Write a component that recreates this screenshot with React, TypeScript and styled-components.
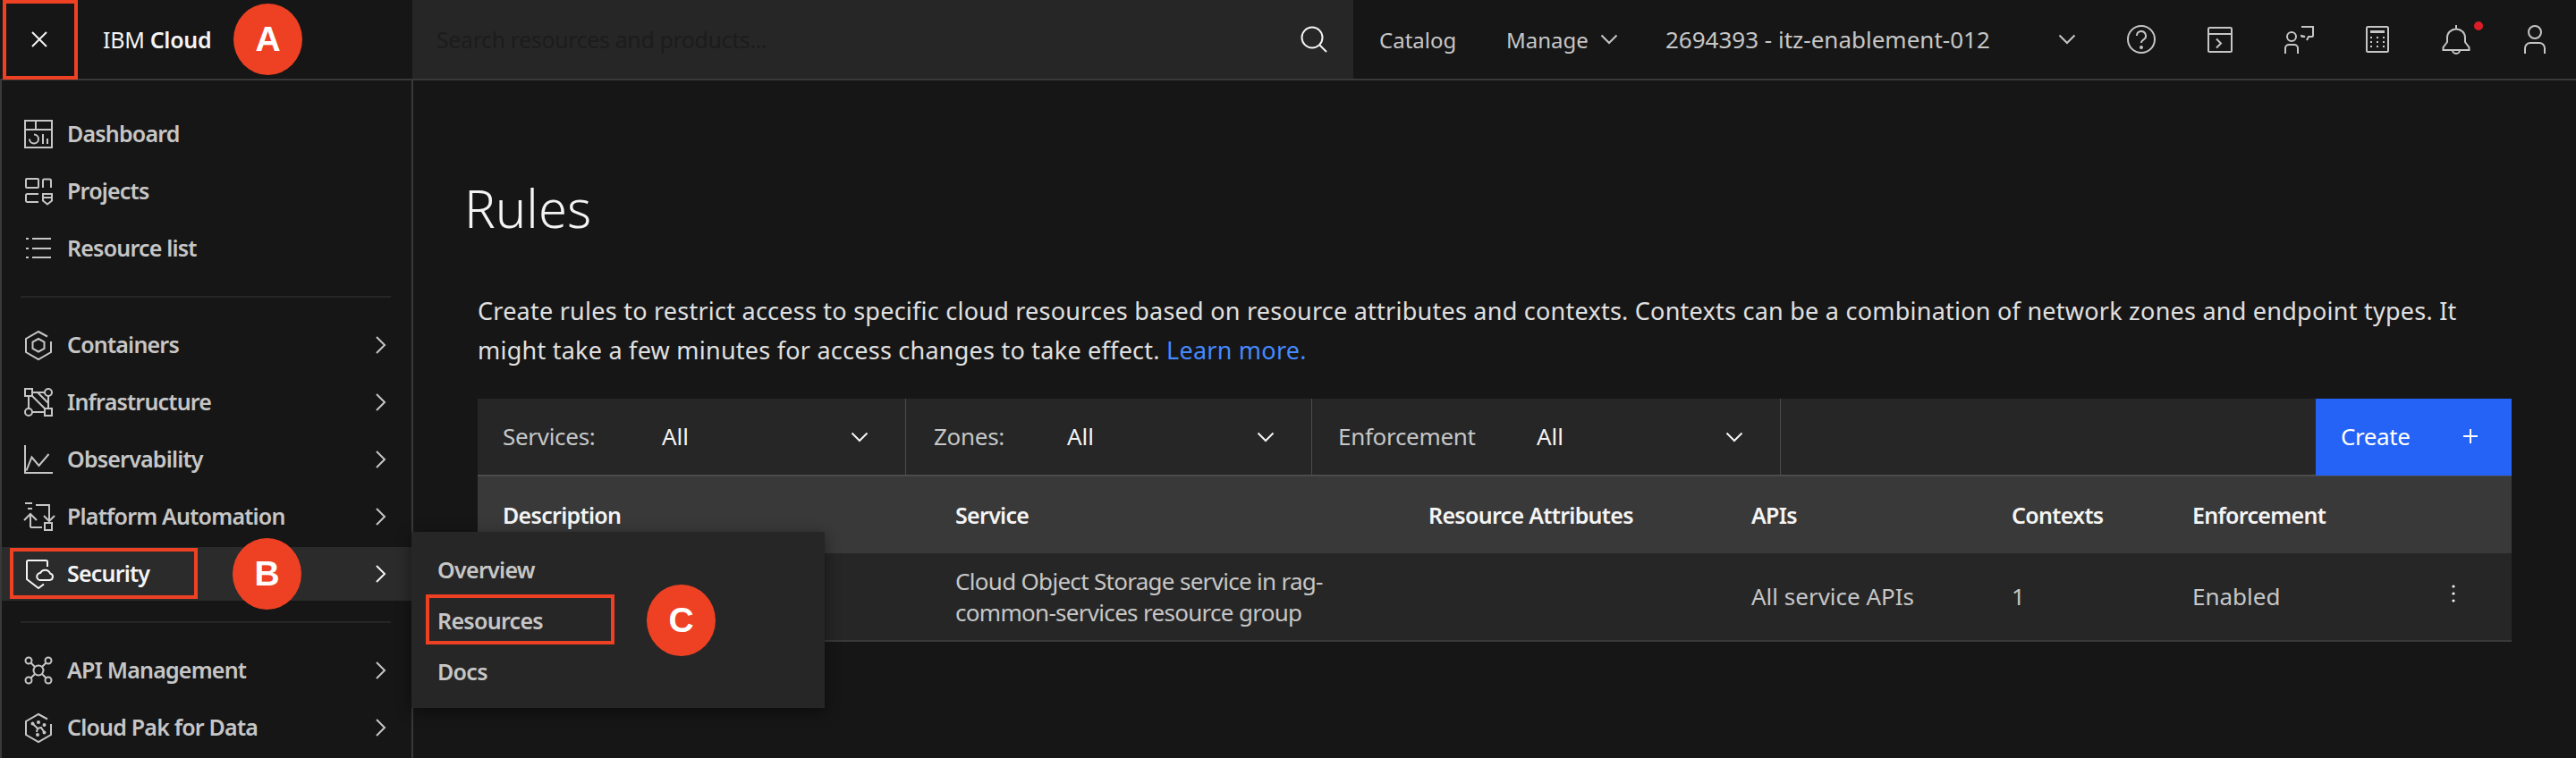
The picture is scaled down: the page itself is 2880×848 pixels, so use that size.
import React from 'react';
import styled, { createGlobalStyle } from 'styled-components';

const RED = '#ee4124';
const FONT = `'Noto Sans', 'Open Sans', sans-serif`;

const GlobalStyle = createGlobalStyle`
  html, body {
    margin: 0;
    padding: 0;
    background: #161616;
    font-family: ${FONT};
  }
  * {
    box-sizing: border-box;
  }
`;

const Page = styled.div`
  position: relative;
  width: 2880px;
  height: 848px;
  overflow: hidden;
  display: flex;
  flex-direction: column;
  background: #161616;
`;

const Header = styled.header`
  display: flex;
  align-items: center;
  height: 90px;
  flex: none;
  border-bottom: 2px solid #393939;
  color: #c6c6c6;
  font-size: 26px;
`;

const CloseButton = styled.div`
  width: 88px;
  height: 88px;
  display: flex;
  align-items: center;
  justify-content: center;
  color: #f4f4f4;
`;

const Brand = styled.div`
  width: 373px;
  padding-left: 27px;
  color: #f4f4f4;
  font-size: 25px;
  letter-spacing: -0.3px;
  b {
    font-weight: 600;
  }
`;

const SearchBox = styled.div`
  width: 1052px;
  height: 88px;
  display: flex;
  align-items: center;
  justify-content: space-between;
  padding: 0 28px 0 27px;
  background: #262626;
  color: #f4f4f4;
`;

const Placeholder = styled.span`
  color: #1c1c1c;
  font-size: 25px;
  letter-spacing: -0.4px;
`;

const NavItem = styled.div<{ $width: number; $small?: boolean }>`
  width: ${p => p.$width}px;
  height: 88px;
  display: flex;
  align-items: center;
  gap: 13px;
  padding: 0 29px;
  white-space: nowrap;
  font-size: ${p => (p.$small ? 24 : 26)}px;
`;

const NavPush = styled.span`
  margin-left: auto;
  display: flex;
`;

const IconButton = styled.div`
  position: relative;
  width: 88px;
  height: 88px;
  display: flex;
  align-items: center;
  justify-content: center;
`;

const NoticeDot = styled.span`
  position: absolute;
  top: 24px;
  right: 14px;
  width: 10px;
  height: 10px;
  border-radius: 50%;
  background: #da1e28;
`;

const Body = styled.div`
  flex: 1;
  display: flex;
  min-height: 0;
`;

const Sidebar = styled.nav`
  width: 462px;
  flex: none;
  padding: 30px 0 0;
  border-left: 2px solid #393939;
  border-right: 2px solid #393939;
  display: flex;
  flex-direction: column;
`;

const NavGroup = styled.div`
  display: flex;
  flex-direction: column;
  gap: 4px;
`;

const Rule = styled.hr`
  margin: 23px 23px 23px 21px;
  height: 2px;
  border: 0;
  background: #262626;
  flex: none;
`;

const SideRow = styled.div<{ $active?: boolean }>`
  height: 60px;
  display: flex;
  align-items: center;
  gap: 16px;
  padding: 0 24px 0 25px;
  font-size: 25px;
  letter-spacing: -0.8px;
  font-weight: 600;
  color: ${p => (p.$active ? '#f4f4f4' : '#c6c6c6')};
  background: ${p => (p.$active ? '#2b2b2b' : 'transparent')};
  span {
    flex: 1;
    white-space: nowrap;
    padding-bottom: 2px;
  }
`;

const Svg = styled.svg<{ $size?: number }>`
  width: ${p => p.$size ?? 32}px;
  height: ${p => p.$size ?? 32}px;
  flex: none;
  fill: none;
  stroke: currentColor;
  stroke-width: 2;
  overflow: visible;
`;

const Main = styled.main`
  flex: 1;
  padding: 105px 72px 0 57px;
  min-width: 0;
`;

const Title = styled.h1`
  margin: 0;
  font-size: 58px;
  line-height: 76px;
  font-weight: 300;
  color: #f4f4f4;
`;

const Content = styled.div`
  margin: 55px 0 0 15px;
`;

const Intro = styled.p`
  margin: 0;
  font-size: 27px;
  letter-spacing: 0.24px;
  line-height: 44px;
  color: #e0e0e0;
  white-space: nowrap;
  a {
    color: #4589ff;
    text-decoration: none;
  }
`;

const Toolbar = styled.div`
  margin-top: 32px;
  height: 87px;
  display: flex;
  background: #262626;
  border-bottom: 2px solid #4c4c4c;
`;

const Filter = styled.div<{ $width: number; $pad: number; $labelWidth: number }>`
  width: ${p => p.$width}px;
  display: flex;
  align-items: center;
  padding: 0 41px 0 ${p => p.$pad}px;
  border-right: 1px solid #4c4c4c;
  font-size: 26px;
  color: #f4f4f4;
  label {
    width: ${p => p.$labelWidth}px;
    color: #c6c6c6;
    padding-bottom: 2px;
    letter-spacing: -0.3px;
  }
  span {
    flex: 1;
    padding-bottom: 2px;
  }
`;

const Spacer = styled.div`
  flex: 1;
`;

const CreateButton = styled.div`
  width: 219px;
  margin-bottom: -1px;
  display: flex;
  align-items: center;
  justify-content: space-between;
  padding: 0 37px 2px 28px;
  background: #2463f5;
  color: #ffffff;
  font-size: 26px;
  letter-spacing: -0.4px;
`;

const columns = '506px 529px 361px 291px 202px 293px 1fr';

const HeadRow = styled.div`
  display: grid;
  grid-template-columns: ${columns};
  align-items: center;
  height: 86px;
  padding-bottom: 1px;
  background: #393939;
  color: #f4f4f4;
  font-size: 25px;
  letter-spacing: -0.7px;
  font-weight: 600;
`;

const DataRow = styled.div`
  display: grid;
  grid-template-columns: ${columns};
  align-items: center;
  height: 99px;
  background: #262626;
  border-bottom: 2px solid #393939;
  color: #c6c6c6;
  font-size: 26px;
  line-height: 35px;
`;

const Cell = styled.div<{ $tight?: boolean }>`
  padding-left: 28px;
  white-space: nowrap;
  letter-spacing: ${p => (p.$tight ? '-0.7px' : 'inherit')};
`;

const MenuCell = styled.div`
  padding: 0 0 8px 11px;
  display: flex;
  color: #f4f4f4;
`;

const Flyout = styled.div`
  position: absolute;
  left: 460px;
  top: 595px;
  width: 462px;
  height: 197px;
  padding: 13px 0 0 29px;
  background: #262626;
  box-shadow: 0 4px 16px rgba(0, 0, 0, 0.45);
  display: flex;
  flex-direction: column;
`;

const FlyoutItem = styled.div`
  height: 57px;
  display: flex;
  align-items: center;
  font-size: 25px;
  letter-spacing: -0.7px;
  font-weight: 600;
  color: #c6c6c6;
`;

const Badge = styled.div<{ $left: number; $top: number }>`
  position: absolute;
  left: ${p => p.$left}px;
  top: ${p => p.$top}px;
  width: 77px;
  height: 80px;
  border-radius: 50%;
  background: ${RED};
  color: #ffffff;
  display: flex;
  align-items: center;
  justify-content: center;
  font-family: 'Liberation Sans', sans-serif;
  font-size: 39px;
  font-weight: 700;
`;

const Callout = styled.div<{ $left: number; $top: number; $width: number; $height: number }>`
  position: absolute;
  left: ${p => p.$left}px;
  top: ${p => p.$top}px;
  width: ${p => p.$width}px;
  height: ${p => p.$height}px;
  border: 4px solid ${RED};
`;

const IconClose = () => (
  <Svg viewBox="0 0 32 32">
    <path d="M8 8 L24 24 M24 8 L8 24" />
  </Svg>
);

const IconSearch = () => (
  <Svg viewBox="0 0 32 32">
    <circle cx="14" cy="14" r="11.5" />
    <path d="M22.5 22.5 L30 30" />
  </Svg>
);

const ChevronDown = () => (
  <Svg $size={20} viewBox="0 0 20 20">
    <path d="M1.5 5.5 L10 14 L18.5 5.5" />
  </Svg>
);

const ChevronRight = () => (
  <Svg $size={20} viewBox="0 0 20 20">
    <path d="M5 1 L14 10 L5 19" />
  </Svg>
);

const IconDashboard = () => (
  <Svg viewBox="0 0 32 32">
    <rect x="1" y="1" width="30" height="30" />
    <path d="M1 11 H31 M13 1 V11 M21 16 V27 M26 21 V27" />
    <path d="M11 16.5 A5 5 0 1 1 6 21.5" />
  </Svg>
);

const IconProjects = () => (
  <Svg viewBox="0 0 32 32">
    <rect x="2" y="2" width="14" height="10" rx="1" />
    <path d="M21 12 V4 a1.5 1.5 0 0 1 1.5 -1.5 h6 a1.5 1.5 0 0 1 1.5 1.5 v8" />
    <path d="M16 19 H3.5 a1.5 1.5 0 0 0 -1.5 1.5 v6 a1.5 1.5 0 0 0 1.5 1.5 H16" />
    <path d="M21 19 h10 v7.5 l-5 4 -5 -4 z M21 23 h10" />
  </Svg>
);

const IconList = () => (
  <Svg viewBox="0 0 32 32">
    <path d="M9 5 H30 M9 16 H30 M9 26 H30 M2 5 H5 M2 16 H5 M2 26 H5" />
  </Svg>
);

const IconContainers = () => (
  <Svg viewBox="0 0 32 32">
    <path d="M26 6.5 L16 1 L2 9 V24 L16 32 L30 24 V12" />
    <path d="M16 9 L22.5 12.5 V20 L16 23.5 L9.5 20 V12.5 Z" />
  </Svg>
);

const IconInfrastructure = () => (
  <Svg viewBox="0 0 32 32">
    <rect x="1" y="1" width="8" height="8" />
    <circle cx="27" cy="5" r="4" />
    <circle cx="5" cy="27" r="4" />
    <rect x="23" y="23" width="8" height="8" />
    <path d="M9 5 H23 M9 27 H23 M5 9 V23 M27 9 V23 M9 9 L23 23 M15 5 L27 17" />
  </Svg>
);

const IconObservability = () => (
  <Svg viewBox="0 0 32 32">
    <path d="M1 0 V31 H32" />
    <path d="M2.5 28.5 L8.5 13.5 L16.5 23 L27.5 10" />
  </Svg>
);

const IconAutomation = () => (
  <Svg viewBox="0 0 32 32">
    <path d="M1 1 H9 M4 7 H9 M13 3 H28 V20 M22 15 L28 21 L34 15" />
    <path d="M7 28 V13 M0 20 L7 13 L14 20 M7 28 H20" />
    <rect x="23" y="23" width="8" height="8" />
  </Svg>
);

const IconSecurity = () => (
  <Svg viewBox="0 0 32 32">
    <path d="M26 8 V2.5 a1.5 1.5 0 0 0 -1.5 -1.5 H4.5 a1.5 1.5 0 0 0 -1.5 1.5 V22 l13 10 6 -4.5" />
    <path d="M18.5 23 a4 4 0 0 1 -.5 -8 a6 6 0 0 1 11 .5 a3.8 3.8 0 0 1 -.5 7.5 z" />
  </Svg>
);

const IconApi = () => (
  <Svg viewBox="0 0 32 32">
    <circle cx="16" cy="16" r="5.5" />
    <circle cx="5" cy="5" r="3.5" />
    <circle cx="27" cy="5" r="3.5" />
    <circle cx="5" cy="27" r="3.5" />
    <circle cx="27" cy="27" r="3.5" />
    <path d="M7.5 7.5 L12 12 M24.5 7.5 L20 12 M7.5 24.5 L12 20 M24.5 24.5 L20 20" />
  </Svg>
);

const IconCloudPak = () => (
  <Svg viewBox="0 0 32 32">
    <path d="M26 6.5 L16 1 L2 9 V24 L16 32 L30 24 V12" />
    <path d="M10 12 L15 17 L19 16 L23 22 M15 17 L14 21" />
    <circle cx="9.5" cy="11.5" r="1" />
    <circle cx="16" cy="10" r="1" />
    <circle cx="22.5" cy="13" r="1" />
    <circle cx="15" cy="24" r="1" />
    <circle cx="22.5" cy="21.5" r="1" />
  </Svg>
);

const IconHelp = () => (
  <Svg viewBox="0 0 32 32">
    <circle cx="16" cy="16" r="15" />
    <path d="M11 12 a5 5 0 1 1 7.5 4.3 c-1.6 .9 -2.5 1.7 -2.5 3.7" />
    <circle cx="16" cy="25" r="1" fill="currentColor" />
  </Svg>
);

const IconTerminal = () => (
  <Svg viewBox="0 0 32 32">
    <rect x="3" y="3" width="26" height="27" rx="1.5" />
    <path d="M3 10 H29 M12 15.5 L17 20.5 L12 25.5" />
  </Svg>
);

const IconPersonChat = () => (
  <Svg viewBox="0 0 32 32">
    <circle cx="8" cy="13" r="5" />
    <path d="M1 32 V26 a4 4 0 0 1 4 -4 h6 a4 4 0 0 1 4 4 V32" />
    <path d="M19 2 H32 V12 a1 1 0 0 1 -1 1 H27 L25 17 M23 13 H20 a1 1 0 0 1 -1 -1 Z" />
  </Svg>
);

const IconCalculator = () => (
  <Svg viewBox="0 0 32 32">
    <rect x="4" y="2" width="24" height="28" rx="1.5" />
    <rect x="8" y="6" width="16" height="3" fill="currentColor" stroke="none" />
    {[13, 18, 23].map(y =>
      [9, 16, 23].map(x => (
        <rect key={`${x}-${y}`} x={x - 1} y={y} width="2" height="2" fill="currentColor" stroke="none" />
      )),
    )}
  </Svg>
);

const IconBell = () => (
  <Svg viewBox="0 0 32 32">
    <path d="M16 0 V5 M6 19 V14 a10 9.5 0 0 1 20 0 V19 L30.5 25 V28 H1.5 V25 Z" />
    <path d="M12 28 a4 4 0 0 0 8 0" />
  </Svg>
);

const IconUser = () => (
  <Svg viewBox="0 0 32 32">
    <circle cx="16" cy="8" r="7" />
    <path d="M5 32 V26 a6 6 0 0 1 6 -6 h10 a6 6 0 0 1 6 6 V32" />
  </Svg>
);

const IconOverflow = () => (
  <Svg viewBox="0 0 32 32">
    <circle cx="16" cy="8" r="1.6" fill="currentColor" stroke="none" />
    <circle cx="16" cy="16" r="1.6" fill="currentColor" stroke="none" />
    <circle cx="16" cy="24" r="1.6" fill="currentColor" stroke="none" />
  </Svg>
);

const IconPlus = () => (
  <Svg $size={18} viewBox="0 0 18 18">
    <path d="M9 1 V17 M1 9 H17" />
  </Svg>
);

const App: React.FC = () => {
  return (
    <Page>
      <GlobalStyle />
      <Header>
        <CloseButton>
          <IconClose />
        </CloseButton>
        <Brand>
          IBM <b>Cloud</b>
        </Brand>
        <SearchBox>
          <Placeholder>Search resources and products...</Placeholder>
          <IconSearch />
        </SearchBox>
        <NavItem $width={142} $small>Catalog</NavItem>
        <NavItem $width={178} $small>
          Manage <ChevronDown />
        </NavItem>
        <NavItem $width={517}>
          2694393 - itz-enablement-012
          <NavPush>
            <ChevronDown />
          </NavPush>
        </NavItem>
        <IconButton>
          <IconHelp />
        </IconButton>
        <IconButton>
          <IconTerminal />
        </IconButton>
        <IconButton>
          <IconPersonChat />
        </IconButton>
        <IconButton>
          <IconCalculator />
        </IconButton>
        <IconButton>
          <IconBell />
          <NoticeDot />
        </IconButton>
        <IconButton>
          <IconUser />
        </IconButton>
      </Header>

      <Body>
        <Sidebar>
          <NavGroup>
            <SideRow>
              <IconDashboard />
              <span>Dashboard</span>
            </SideRow>
            <SideRow>
              <IconProjects />
              <span>Projects</span>
            </SideRow>
            <SideRow>
              <IconList />
              <span>Resource list</span>
            </SideRow>
          </NavGroup>
          <Rule />
          <NavGroup>
            <SideRow>
              <IconContainers />
              <span>Containers</span>
              <ChevronRight />
            </SideRow>
            <SideRow>
              <IconInfrastructure />
              <span>Infrastructure</span>
              <ChevronRight />
            </SideRow>
            <SideRow>
              <IconObservability />
              <span>Observability</span>
              <ChevronRight />
            </SideRow>
            <SideRow>
              <IconAutomation />
              <span>Platform Automation</span>
              <ChevronRight />
            </SideRow>
            <SideRow $active>
              <IconSecurity />
              <span>Security</span>
              <ChevronRight />
            </SideRow>
          </NavGroup>
          <Rule />
          <NavGroup>
            <SideRow>
              <IconApi />
              <span>API Management</span>
              <ChevronRight />
            </SideRow>
            <SideRow>
              <IconCloudPak />
              <span>Cloud Pak for Data</span>
              <ChevronRight />
            </SideRow>
          </NavGroup>
        </Sidebar>

        <Main>
          <Title>Rules</Title>
          <Content>
            <Intro>
              Create rules to restrict access to specific cloud resources based on resource attributes and contexts.
              Contexts can be a combination of network zones and endpoint types. It
              <br />
              might take a few minutes for access changes to take effect. <a href="#learn">Learn more.</a>
            </Intro>
            <Toolbar>
              <Filter $width={479} $pad={28} $labelWidth={178}>
                <label>Services:</label>
                <span>All</span>
                <ChevronDown />
              </Filter>
              <Filter $width={454} $pad={31} $labelWidth={149}>
                <label>Zones:</label>
                <span>All</span>
                <ChevronDown />
              </Filter>
              <Filter $width={524} $pad={29} $labelWidth={222}>
                <label>Enforcement</label>
                <span>All</span>
                <ChevronDown />
              </Filter>
              <Spacer />
              <CreateButton>
                Create <IconPlus />
              </CreateButton>
            </Toolbar>
            <HeadRow>
              <Cell>Description</Cell>
              <Cell>Service</Cell>
              <Cell>Resource Attributes</Cell>
              <Cell>APIs</Cell>
              <Cell>Contexts</Cell>
              <Cell>Enforcement</Cell>
            </HeadRow>
            <DataRow>
              <Cell />
              <Cell $tight>
                Cloud Object Storage service in rag-
                <br />
                common-services resource group
              </Cell>
              <Cell />
              <Cell>All service APIs</Cell>
              <Cell>1</Cell>
              <Cell>Enabled</Cell>
              <MenuCell>
                <IconOverflow />
              </MenuCell>
            </DataRow>
          </Content>
        </Main>
      </Body>

      <Flyout>
        <FlyoutItem>Overview</FlyoutItem>
        <FlyoutItem>Resources</FlyoutItem>
        <FlyoutItem>Docs</FlyoutItem>
      </Flyout>

      <Callout $left={3} $top={0} $width={84} $height={89} />
      <Callout $left={11} $top={613} $width={210} $height={57} />
      <Callout $left={476} $top={665} $width={211} $height={56} />
      <Badge $left={261} $top={4}>A</Badge>
      <Badge $left={260} $top={602}>B</Badge>
      <Badge $left={723} $top={654}>C</Badge>
    </Page>
  );
};

export default App;
